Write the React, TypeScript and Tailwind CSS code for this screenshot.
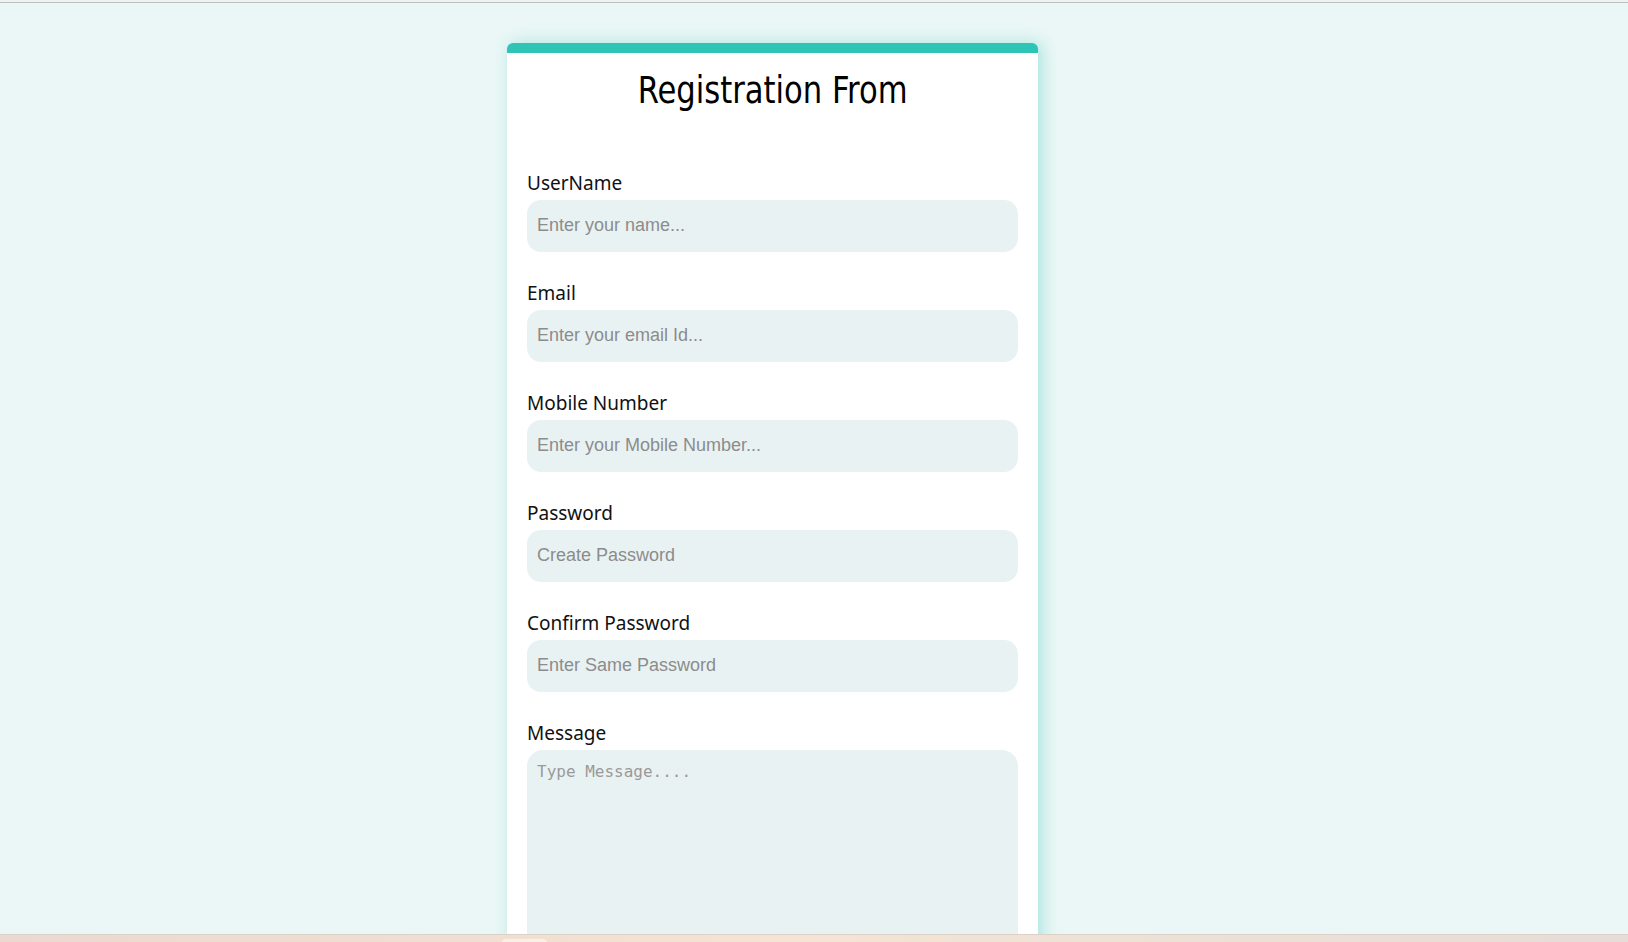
import React from 'react';

const fields = [
  { label: 'UserName', placeholder: 'Enter your name...', type: 'text' },
  { label: 'Email', placeholder: 'Enter your email Id...', type: 'email' },
  { label: 'Mobile Number', placeholder: 'Enter your Mobile Number...', type: 'tel' },
  { label: 'Password', placeholder: 'Create Password', type: 'password' },
  { label: 'Confirm Password', placeholder: 'Enter Same Password', type: 'password' },
];

export default function App() {
  return (
    <div className="h-screen w-full flex flex-col overflow-hidden bg-[#eaf7f6]">
      {/* browser edge */}
      <div className="h-[2px] shrink-0 bg-[#eef3f3]" />
      <div className="h-px shrink-0 bg-[#bfbfbf]" />

      <main className="flex-1 min-h-0 overflow-hidden pt-[40px]">
        <div className="ml-[507px] w-[531px] bg-white rounded-t-[6px] border-t-[10px] border-[#2ec4b6] px-5 pt-[16px] pb-10 shadow-[4px_0_16px_rgba(46,196,182,0.35)]">
          <h1 className="text-center text-[37px] leading-[44px] text-black font-['DejaVu_Sans_Condensed','DejaVu_Sans',sans-serif] font-stretch-condensed">
            <span className="inline-block scale-x-[0.92]">Registration From</span>
          </h1>

          <form className="mt-[56px]">
            {fields.map(f => (
              <div key={f.label} className="mb-[27px]">
                <label className="block mb-[3px] text-[19px] leading-[28px] text-[#111] font-['Noto_Sans',sans-serif]">
                  {f.label}
                </label>
                <input
                  type={f.type}
                  placeholder={f.placeholder}
                  className="block w-full h-[52px] rounded-[14px] bg-[#e9f2f3] px-[10px] pb-[2px] text-[18px] text-[#333] placeholder:text-[#8c8c8c] font-['Liberation_Sans',Arial,sans-serif] outline-none"
                />
              </div>
            ))}

            <div>
              <label className="block mb-[3px] text-[19px] leading-[28px] text-[#111] font-['Noto_Sans',sans-serif]">
                Message
              </label>
              <textarea
                placeholder="Type Message...."
                className="block w-full h-[260px] resize-none rounded-[16px] bg-[#e9f2f3] px-[10px] pt-[10px] text-[16px] text-[#333] placeholder:text-[#9a9a9a] font-['DejaVu_Sans_Mono','Liberation_Mono',monospace] outline-none"
              />
            </div>
          </form>
        </div>
      </main>

      {/* taskbar strip */}
      <div className="h-[8px] shrink-0 bg-gradient-to-r from-[#ead9d0] via-[#f3e4d4] to-[#e6dcd8] border-t border-[#ddd0c6] flex">
        <div className="ml-[502px] mt-[4px] w-[45px] h-[4px] rounded-t-[4px] bg-[#f7efe8]" />
      </div>
    </div>
  );
}
